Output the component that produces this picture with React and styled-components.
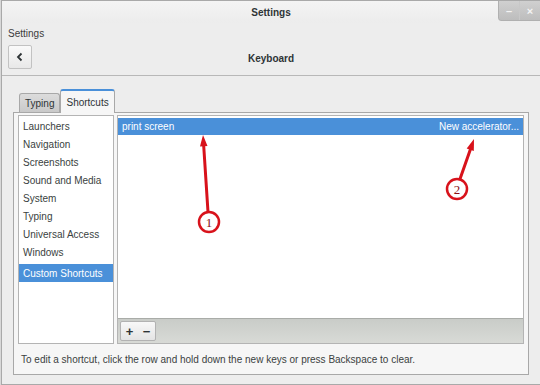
import React from 'react';
import styled, { createGlobalStyle } from 'styled-components';

const GlobalStyle = createGlobalStyle`
  html, body {
    margin: 0;
    padding: 0;
    background: #d8d8d8;
  }
  body {
    font-family: "Liberation Sans", "DejaVu Sans", sans-serif;
    font-size: 10px;
    color: #3a3f41;
  }
`;

const Window = styled.div`
  position: relative;
  width: 538px;
  height: 383px;
  margin-left: 1px;
  border: 1px solid #a9a9a9;
  background: #ededed;
  display: flex;
  flex-direction: column;
  overflow: hidden;
`;

const TitleBar = styled.div`
  height: 22px;
  display: flex;
  align-items: center;
  justify-content: center;
  position: relative;
  background: linear-gradient(#f4f4f4, #ececec);
  font-weight: bold;
  font-size: 10px;
  color: #2e3436;
`;

const Controls = styled.div`
  position: absolute;
  right: -1px;
  top: -1px;
  display: flex;
  height: 19px;
  border-radius: 0 0 0 3px;
  background: linear-gradient(#d0d0d0, #bdbdbd);
  border: 1px solid #b0b0b0;
`;

const ControlBtn = styled.div`
  width: 20px;
  display: flex;
  align-items: center;
  justify-content: center;
  color: #f4f4f4;
  font-size: 11px;
  font-weight: bold;
  & + & {
    border-left: 1px solid #c8c8c8;
  }
`;

const Header = styled.div`
  height: 52px;
  padding: 0 6px;
  display: flex;
  flex-direction: column;
  border-bottom: 1px solid #b8b8b8;
`;

const Crumb = styled.div`
  height: 21px;
  display: flex;
  align-items: center;
  font-size: 10px;
  color: #3c3c3c;
`;

const NavRow = styled.div`
  display: flex;
  align-items: center;
  height: 25px;
`;

const BackButton = styled.div`
  width: 22px;
  height: 22px;
  border: 1px solid #c2c2c2;
  border-radius: 2px;
  background: linear-gradient(#fafafa, #e8e8e8);
  display: flex;
  align-items: center;
  justify-content: center;
`;

const PageTitle = styled.div`
  flex: 1;
  text-align: center;
  font-weight: bold;
  font-size: 10px;
  margin-right: 24px;
  padding-top: 4px;
  color: #2e3436;
`;

const Body = styled.div`
  flex: 1;
  padding: 14px 11px 9px 11px;
  display: flex;
  flex-direction: column;
`;

const Tabs = styled.div`
  display: flex;
  align-items: flex-end;
  padding-left: 6px;
  height: 22px;
`;

const Tab = styled.div`
  height: ${({ $active }) => ($active ? '22px' : '18px')};
  padding: 0 ${({ $active }) => ($active ? '5px' : '5px')};
  display: flex;
  align-items: center;
  border: 1px solid #a8a8a8;
  border-bottom: none;
  border-radius: 3px 3px 0 0;
  margin-bottom: ${({ $active }) => ($active ? '-1px' : '0')};
  background: ${({ $active }) =>
    $active ? '#f6f6f6' : 'linear-gradient(#dcdcdc, #c9c9c9)'};
  border-top: ${({ $active }) => ($active ? '2px solid #4a90d9' : '1px solid #a8a8a8')};
  color: #2e3436;
  font-size: 10px;
  position: relative;
  z-index: ${({ $active }) => ($active ? 1 : 0)};
`;

const Notebook = styled.div`
  flex: 1;
  border: 1px solid #a8a8a8;
  background: #f6f6f6;
  padding: 2px 4px 0 4px;
  display: flex;
  flex-direction: column;
`;

const Panes = styled.div`
  display: flex;
  gap: 3px;
  height: 229px;
`;

const Sidebar = styled.div`
  width: 94px;
  border: 1px solid #b4b4b4;
  background: #fff;
  display: flex;
  flex-direction: column;
  padding-top: 1px;
`;

const SideItem = styled.div`
  height: 18px;
  display: flex;
  align-items: center;
  padding-left: 4px;
  margin-top: ${({ $gap }) => ($gap ? '3px' : '0')};
  background: ${({ $selected }) => ($selected ? '#4a90d9' : 'transparent')};
  color: ${({ $selected }) => ($selected ? '#fff' : '#3a3f41')};
  white-space: nowrap;
`;

const ShortcutBox = styled.div`
  flex: 1;
  border: 1px solid #b4b4b4;
  background: #fff;
  display: flex;
  flex-direction: column;
`;

const ShortcutList = styled.div`
  flex: 1;
  padding-top: 2px;
`;

const ShortcutRow = styled.div`
  height: 17px;
  display: flex;
  align-items: center;
  justify-content: space-between;
  padding: 0 4px;
  background: ${({ $selected }) => ($selected ? '#4a90d9' : 'transparent')};
  color: ${({ $selected }) => ($selected ? '#fff' : '#3a3f41')};
`;

const Toolbar = styled.div`
  height: 24px;
  border-top: 1px solid #a9aca8;
  background: linear-gradient(#c9ccc8, #d8dad6);
  display: flex;
  align-items: center;
  padding-left: 2px;
`;

const ToolGroup = styled.div`
  display: flex;
  border: 1px solid #b2b2b2;
  border-radius: 2px;
  background: linear-gradient(#f8f8f8, #e4e4e4);
  height: 18px;
`;

const ToolBtn = styled.div`
  width: 17px;
  display: flex;
  align-items: center;
  justify-content: center;
  font-size: 13px;
  font-weight: bold;
  color: #2e3436;
  line-height: 1;
`;

const Footer = styled.div`
  flex: 1;
  display: flex;
  align-items: center;
  padding-left: 3px;
  color: #3a3f41;
`;

const Overlay = styled.svg`
  position: absolute;
  left: 0;
  top: 0;
  pointer-events: none;
`;

const categories = [
  'Launchers',
  'Navigation',
  'Screenshots',
  'Sound and Media',
  'System',
  'Typing',
  'Universal Access',
  'Windows',
];

function Callout({ x1, y1, x2, y2, cx, cy, label }) {
  const ang = Math.atan2(y2 - y1, x2 - x1);
  const len = 12;
  const spread = 0.32;
  const p1 = [x2 - len * Math.cos(ang - spread), y2 - len * Math.sin(ang - spread)];
  const p2 = [x2 - len * Math.cos(ang + spread), y2 - len * Math.sin(ang + spread)];
  return (
    <g>
      <line x1={x1} y1={y1} x2={x2 - 6 * Math.cos(ang)} y2={y2 - 6 * Math.sin(ang)} stroke="#d8121b" strokeWidth="3" strokeLinecap="round" />
      <polygon points={`${x2},${y2} ${p1[0]},${p1[1]} ${p2[0]},${p2[1]}`} fill="#d8121b" />
      <circle cx={cx} cy={cy} r="10" fill="#fff" stroke="#d8121b" strokeWidth="2.5" />
      <text x={cx} y={cy + 4.5} textAnchor="middle" fontFamily="Liberation Serif, serif" fontSize="13" fill="#8b0f14">{label}</text>
    </g>
  );
}

export default function App() {
  return (
    <>
      <GlobalStyle />
      <Window>
        <TitleBar>
          Settings
          <Controls>
            <ControlBtn>–</ControlBtn>
            <ControlBtn>×</ControlBtn>
          </Controls>
        </TitleBar>
        <Header>
          <Crumb>Settings</Crumb>
          <NavRow>
            <BackButton>
              <svg width="10" height="10" viewBox="0 0 10 10">
                <path d="M6.5 1.5 L3 5 L6.5 8.5" fill="none" stroke="#2e3436" strokeWidth="1.8" />
              </svg>
            </BackButton>
            <PageTitle>Keyboard</PageTitle>
          </NavRow>
        </Header>
        <Body>
          <Tabs>
            <Tab>Typing</Tab>
            <Tab $active>Shortcuts</Tab>
          </Tabs>
          <Notebook>
            <Panes>
              <Sidebar>
                {categories.map((c) => (
                  <SideItem key={c}>{c}</SideItem>
                ))}
                <SideItem $selected $gap>Custom Shortcuts</SideItem>
              </Sidebar>
              <ShortcutBox>
                <ShortcutList>
                  <ShortcutRow $selected>
                    <span>print screen</span>
                    <span>New accelerator...</span>
                  </ShortcutRow>
                </ShortcutList>
                <Toolbar>
                  <ToolGroup>
                    <ToolBtn>+</ToolBtn>
                    <ToolBtn>−</ToolBtn>
                  </ToolGroup>
                </Toolbar>
              </ShortcutBox>
            </Panes>
            <Footer>
              To edit a shortcut, click the row and hold down the new keys or press Backspace to clear.
            </Footer>
          </Notebook>
        </Body>
        <Overlay width="540" height="385" viewBox="0 0 540 385">
          <Callout x1={206} y1={211} x2={201} y2={134} cx={207} cy={221} label="1" />
          <Callout x1={458} y1={178} x2={472} y2={138} cx={455} cy={188} label="2" />
        </Overlay>
      </Window>
    </>
  );
}
